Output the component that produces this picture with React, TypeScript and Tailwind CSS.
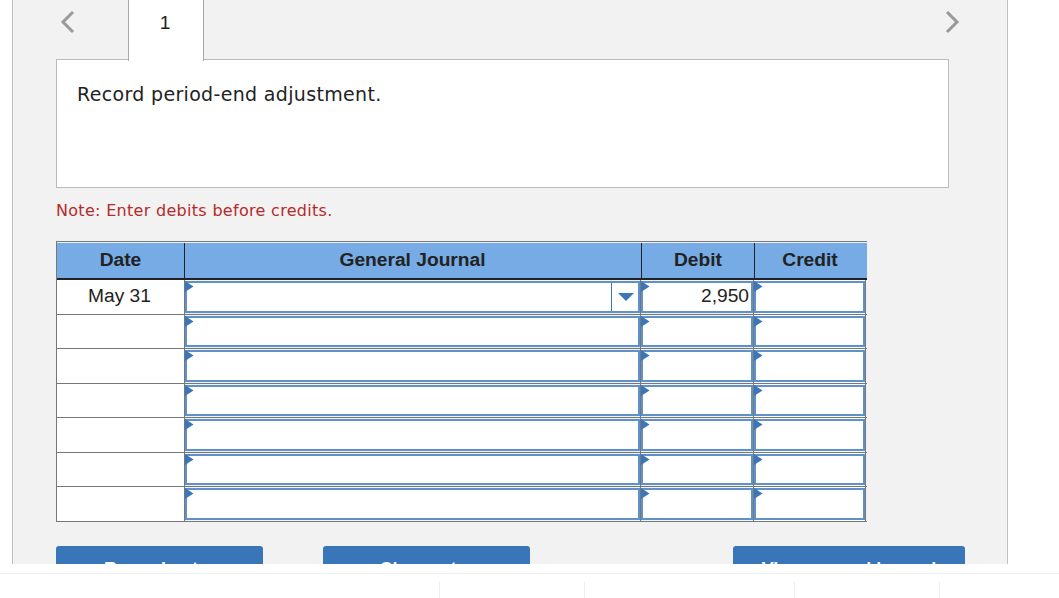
const ROWS = [
  { date: "May 31", debit: "2,950", select: true },
  { date: "", debit: "", select: false },
  { date: "", debit: "", select: false },
  { date: "", debit: "", select: false },
  { date: "", debit: "", select: false },
  { date: "", debit: "", select: false },
  { date: "", debit: "", select: false },
];

function Marker() {
  return (
    <svg className="absolute left-0 top-0" width="9" height="13" viewBox="0 0 9 13">
      <path d="M0 1 L8.5 6.5 L0 12 Z" fill="#3a76b8" />
    </svg>
  );
}

function Cell({
  className,
  children,
}: {
  className: string;
  children?: React.ReactNode;
}) {
  return (
    <div className={`relative flex items-center py-px ${className}`}>
      <div className="flex h-full w-full items-center justify-end border-2 border-[#5f91cb] bg-white pr-[2px]">
        {children}
      </div>
      <Marker />
    </div>
  );
}

export default function App() {
  return (
    <div className="h-[598px] w-[1059px] overflow-hidden bg-white font-['Liberation_Sans',sans-serif]">
      <div className="ml-3 h-[564px] w-[996px] overflow-hidden border-x border-[#c0c0c0] bg-[#f2f2f2] pl-[43px]">
        <div className="flex h-[59px] w-[893px] items-start">
          <svg className="ml-[4px] mt-[10px]" width="16" height="24" viewBox="0 0 16 24">
            <path d="M13 2 L3 12 L13 22" fill="none" stroke="#999" strokeWidth="3" />
          </svg>
          <div className="relative z-10 ml-[52px] flex h-[61px] w-[76px] justify-center border-x border-[#aaa] bg-white pr-[2px] pt-[13px] text-[19.2px] leading-5 text-[#222]">
            1
          </div>
          <svg className="ml-auto mr-[-11px] mt-[10px]" width="16" height="24" viewBox="0 0 16 24">
            <path d="M3 2 L13 12 L3 22" fill="none" stroke="#999" strokeWidth="3" />
          </svg>
        </div>

        <div className="h-[129px] w-[893px] border border-[#bbb] bg-white px-5 pt-[22px] font-['DejaVu_Sans',sans-serif] text-[19px] leading-[24px] tracking-[0.33px] text-[#222]">
          Record period-end adjustment.
        </div>

        <p className="mt-[13px] font-['DejaVu_Sans',sans-serif] text-[16px] leading-5 tracking-[0.3px] text-[#b52a2a]">
          Note: Enter debits before credits.
        </p>

        <div className="mt-5 w-[811px] border-y border-l border-[#777] text-[19.2px] text-[#222]">
          <div className="mt-px flex h-[37px] border-b-2 border-[#222] bg-[#76abe5] font-bold leading-[33px]">
            <div className="w-[128px] border-r border-[#222] text-center">Date</div>
            <div className="w-[457px] border-r border-[#222] pr-px text-center">General Journal</div>
            <div className="w-[113px] border-r border-[#222] text-center">Debit</div>
            <div className="w-[112px] pr-[2px] text-center">Credit</div>
          </div>
          {ROWS.map((row, i) => (
            <div key={i} className="flex h-[34.5px] border-b border-[#777] last:h-[34px] last:border-b-0">
              <div className="w-[128px] border-r border-[#777] bg-white pr-[2px] text-center leading-[32px]">
                {row.date}
              </div>
              <Cell className="w-[456px] border-r border-[#777]">
                {row.select && (
                  <div className="flex h-[28px] w-[25px] items-center justify-center border-l border-[#3a76b8] pl-[3px]">
                    <svg width="16" height="8" viewBox="0 0 16 8">
                      <path d="M0 0 L16 0 L8 8 Z" fill="#3a76b8" />
                    </svg>
                  </div>
                )}
              </Cell>
              <Cell className="w-[113px] border-r border-[#777]">{row.debit}</Cell>
              <Cell className="w-[112px] border-r border-[#777] bg-white">{null}</Cell>
            </div>
          ))}
        </div>

        <div className="mt-6 flex font-bold text-white">
          <div className="h-10 w-[207px] rounded-t-[3px] bg-[#3975b9] pt-[13px] text-center text-[18px] leading-5">
            Record entry
          </div>
          <div className="ml-[60px] h-10 w-[207px] rounded-t-[3px] bg-[#3975b9] pt-[13px] text-center text-[18px] leading-5">
            Clear entry
          </div>
          <div className="ml-[203px] h-10 w-[232px] rounded-t-[3px] bg-[#3975b9] pt-[13px] text-center text-[18px] leading-5">
            View general journal
          </div>
        </div>
      </div>

      <div className="mt-[9px] h-[25px] border-t border-[#f0f0f0] pt-2">
        <div className="flex h-4">
          <div className="ml-[439px] w-[146px] border-x border-[#eee]" />
          <div className="ml-[209px] w-[146px] border-x border-[#eee]" />
        </div>
      </div>
    </div>
  );
}
